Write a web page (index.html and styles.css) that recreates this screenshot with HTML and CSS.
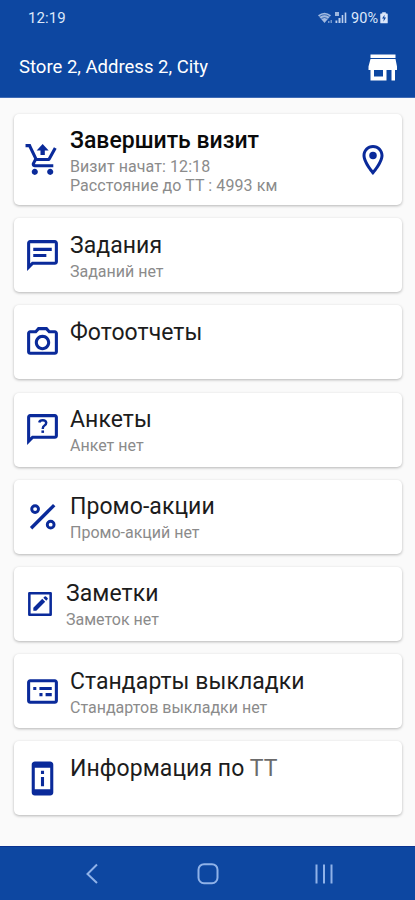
FILE: index.html
```
<!DOCTYPE html>
<html lang="ru">
<head>
<meta charset="utf-8">
<title>Store 2</title>
<link rel="stylesheet" href="styles.css">
</head>
<body>
<header class="top">
  <div class="status">
    <span class="time">12:19</span>
    <svg class="signals" width="30" height="14" viewBox="0 0 30 14">
      <path d="M0 4.2Q6.5-.8 13 4.2L6.5 12z" opacity=".72"/>
      <path d="M1.5 5.5Q6.5 2 11.500 5.500M3.500 7.500Q6.500 5.500 9.500 7.500" fill="none" stroke="#0d47a1" stroke-width=".7"/>
      <path d="M10 10h1.500v2H10zM12.500 9H14v3h-1.500z" opacity=".5"/>
      <path d="M17 1h4v4h-4z" opacity=".7"/>
      <path d="M17.500 9.500h1.800V12h-1.800zM20.500 7h2v5h-2zM23.700 4h1.600v8h-1.600zM26.700 1.500h1.600V12h-1.600z" opacity=".85"/>
    </svg>
    <span class="percent">90%</span>
    <svg class="battery" width="8" height="12" viewBox="0 0 9 13"><path d="M2.500 0h4v1.500H8q.7 0 .7.700v9.600q0 .7-.7.700H1q-.7 0-.7-.7V2.200q0-.7.700-.7h1.500z"/><path d="M5.200 2.800 2.300 7.200h2L3.800 10.600 6.800 6h-2z" fill="#0d47a1"/></svg>
  </div>
  <div class="appbar">
    <h1>Store 2, Address 2, City</h1>
    <svg class="store" width="30" height="27" viewBox="0 0 30 27"><path d="M2.500.5h25v3.500h-25zM2.500 5h25l1.500 7.500v3.500h-2v10.500h-3.500V16h-5v10.500h-16V16h-2v-3.500zM6 16v6.500h9V16z" fill-rule="evenodd"/></svg>
  </div>
</header>
<main class="list">
  <section class="card visit">
    <svg class="icon" viewBox="0 0 24 24"><path d="M10.700 9h2.800V6.200h2.500L12.100 2 8.200 6.200h2.500zM7 18c-1.100 0-1.990.9-1.990 2S5.900 22 7 22s2-.9 2-2-.9-2-2-2zm10 0c-1.100 0-1.990.9-1.990 2s.89 2 1.990 2 2-.9 2-2-.9-2-2-2zM7.170 14.750l.03-.12.900-1.630h7.450c.75 0 1.410-.41 1.750-1.030l3.860-7.010L19.420 4h-.01l-1.100 2-2.760 5H8.530l-.13-.27L6.160 6l-.95-2-.94-2H1v2h2l3.600 7.590-1.350 2.450c-.16.28-.25.610-.25.960 0 1.100.9 2 2 2h12v-2H7.420c-.13 0-.25-.11-.25-.25z"/></svg>
    <div class="text"><h2>Завершить визит</h2><p>Визит начат: 12:18</p><p>Расстояние до ТТ : 4993 км</p></div>
    <svg class="pin" viewBox="0 0 24 24"><path d="M12 2C8.130 2 5 5.130 5 9c0 5.250 7 13 7 13s7-7.750 7-13c0-3.870-3.130-7-7-7zM7 9c0-2.760 2.240-5 5-5s5 2.240 5 5c0 2.880-2.880 7.190-5 9.880C9.920 16.210 7 11.850 7 9z"/><circle cx="12" cy="9" r="2.500"/></svg>
  </section>
  <section class="card">
    <svg class="icon" viewBox="0 0 24 24"><path d="M4 4h16v12H5.170L4 17.170V4m0-2c-1.100 0-1.990.9-1.990 2L2 22l4-4h14c1.100 0 2-.9 2-2V4c0-1.100-.9-2-2-2H4zm2 9h8.500v2H6v-2zm0-4h12v2H6V7z"/></svg>
    <div class="text"><h2>Задания</h2><p>Заданий нет</p></div>
  </section>
  <section class="card">
    <svg class="icon" viewBox="0 0 24 24"><path d="M20 4h-3.170L15 2H9L7.170 4H4c-1.100 0-2 .9-2 2v12c0 1.100.9 2 2 2h16c1.100 0 2-.9 2-2V6c0-1.100-.9-2-2-2zm0 14H4V6h4.050l1.830-2h4.240l1.830 2H20v12zM12 7c-2.760 0-5 2.240-5 5s2.240 5 5 5 5-2.240 5-5-2.240-5-5-5zm0 8c-1.650 0-3-1.350-3-3s1.350-3 3-3 3 1.350 3 3-1.350 3-3 3z"/></svg>
    <div class="text"><h2>Фотоотчеты</h2><p>&nbsp;</p></div>
  </section>
  <section class="card">
    <svg class="icon" viewBox="0 0 24 24"><path d="M4 4h16v12H5.170L4 17.170V4m0-2c-1.100 0-1.990.9-1.990 2L2 22l4-4h14c1.100 0 2-.9 2-2V4c0-1.100-.9-2-2-2z"/><path d="M9.900 7.500Q10.200 6 12.200 6t2.200 1.600Q14.400 8.800 13.300 9.400T12.200 11.300v.4" fill="none" stroke="currentColor" stroke-width="1.600"/><path d="M11.300 12.600H13v1.600h-1.700z"/></svg>
    <div class="text"><h2>Анкеты</h2><p>Анкет нет</p></div>
  </section>
  <section class="card">
    <svg class="icon" viewBox="0 0 24 24"><path d="M4.600 19.600 19.600 4.600" fill="none" stroke="currentColor" stroke-width="2.200"/><g fill="none" stroke="currentColor" stroke-width="1.900"><circle cx="7.200" cy="7.200" r="2.200"/><circle cx="17.300" cy="17.300" r="2.200"/></g></svg>
    <div class="text"><h2>Промо-акции</h2><p>Промо-акций нет</p></div>
  </section>
  <section class="card notes">
    <svg class="icon" viewBox="0 0 24 24"><path d="M4 4h16v16H4z" fill="none" stroke="currentColor" stroke-width="1.900" stroke-linejoin="round"/><path d="m7 14.800 6.700-6.700L15.900 10.300 9.200 17H7zM14.500 7.300l1-1q.5-.4 1 0l1.200 1.200q.4.500 0 1l-1 1z"/></svg>
    <div class="text"><h2>Заметки</h2><p>Заметок нет</p></div>
  </section>
  <section class="card">
    <svg class="icon" viewBox="0 0 24 24"><path d="M20 4H4c-1.100 0-2 .9-2 2v12c0 1.100.9 2 2 2h16c1.100 0 2-.9 2-2V6c0-1.100-.9-2-2-2zm0 14H4V6h16v12zM6 9h2v2H6zM10 9h8v2h-8zM10 13h2v2h-2zM14 13h4v2h-4z"/></svg>
    <div class="text"><h2>Стандарты выкладки</h2><p>Стандартов выкладки нет</p></div>
  </section>
  <section class="card">
    <svg class="icon" viewBox="0 0 24 24"><path d="M17 1.010 7 1c-1.100 0-2 .9-2 2v18c0 1.100.9 2 2 2h10c1.100 0 2-.9 2-2V3c0-1.100-.9-1.990-2-1.990zM17 19H7V5h10v14zM11 7h2v2h-2zM11 11h2v6h-2z"/></svg>
    <div class="text"><h2>Информация по <span class="faint">ТТ</span></h2><p>&nbsp;</p></div>
  </section>
</main>
<nav class="nav">
  <svg viewBox="0 0 24 24"><path d="M17 2.500 7.500 12l9.500 9"/></svg>
  <svg viewBox="0 0 24 24"><rect x="2.500" y="2.200" width="19" height="19" rx="5.500"/></svg>
  <svg viewBox="0 0 24 24"><path d="M4.500 2.500v19M12 2.500v19M19.500 2.500v19"/></svg>
</nav>
</body>
</html>
```
FILE: styles.css
```
* { box-sizing: border-box; }
body {
  margin: 0;
  width: 415px;
  height: 900px;
  display: flex;
  flex-direction: column;
  overflow: hidden;
  background: #fafafa;
  font-family: Roboto, "Liberation Sans", sans-serif;
}
h1, h2, p { margin: 0; font-weight: 400; white-space: nowrap; }
svg { display: block; flex: none; fill: currentColor; }

.top { height: 98px; background: #0d47a1; color: #fff; border-bottom: 1px solid #3f6bb5; }
.status { height: 36px; display: flex; align-items: center; padding: 0 27px 0 28px; color: #dce7fa; font-size: 15px; }
.time { margin-right: auto; letter-spacing: .1px; }
.signals { margin-right: 3px; }
.percent { font-size: 14.5px; margin-right: 2px; }
.appbar { height: 62px; display: flex; align-items: center; justify-content: space-between; padding: 0 17px 0 19px; }
h1 { font-size: 18.5px; line-height: 24px; }

.list { flex: 1; padding: 16px 13px 0 14px; display: flex; flex-direction: column; gap: 13.2px; }
.card {
  height: 74px;
  flex: none;
  display: flex;
  align-items: center;
  gap: 9px;
  padding: 0 11px 0 10px;
  background: #fff;
  border-radius: 5px;
  color: #0a2a9a;
  box-shadow: 0 1px 3px rgba(0, 0, 0, .28);
}
.visit { height: 91px; }
.icon { width: 37px; height: 37px; }
.notes { gap: 10px; }
.notes .icon { width: 32px; height: 32px; }
.pin { width: 36px; height: 36px; margin-left: auto; }
.text { color: #1c1c1c; padding-top: 2px; }
h2 { font-size: 23px; line-height: 28px; letter-spacing: .06px; }
p { font-size: 16px; line-height: 19px; color: #8b8b8b; margin-top: 2px; }
.visit .text { padding-top: 3px; }
.visit h2 { font-weight: 500; color: #0a0a0a; letter-spacing: 0; }
.visit p { margin-top: 0; letter-spacing: .08px; }
.visit h2 + p { margin-top: 2px; }
.faint { color: #6b6b6b; }

.nav { height: 54px; flex: none; display: flex; justify-content: space-between; align-items: center; padding: 0 79px 0 80px; background: #0d47a1; color: #8fb2e8; border-top: 1px solid #0a3390; }
.nav svg { width: 24px; height: 24px; fill: none; stroke: currentColor; stroke-width: 2; }
```
